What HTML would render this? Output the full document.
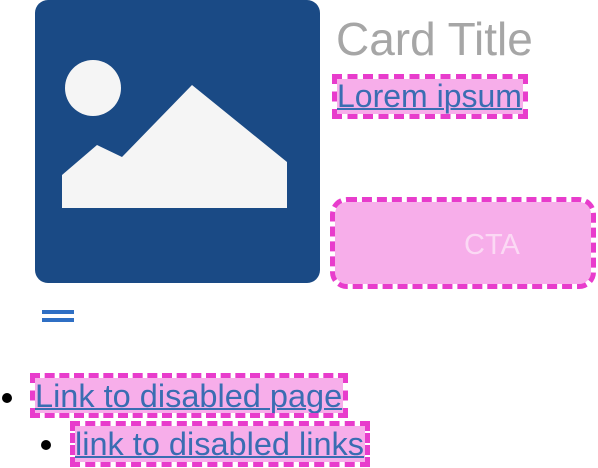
<!DOCTYPE html>
<html><head><style>
body{margin:0;width:598px;height:468px;background:#fff;font-family:"Liberation Sans",sans-serif;position:relative;overflow:hidden}
.a{position:absolute}
.lnk{position:absolute;background:#f7aeea;outline:5px dashed #e83ccc;color:#3a6db2;text-decoration:underline;text-decoration-thickness:2px;white-space:nowrap;line-height:1}
.dot{position:absolute;width:10px;height:10px;border-radius:50%;background:#000}
</style></head><body>
<svg class="a" style="left:35px;top:0" width="286" height="284" viewBox="35 0 286 284">
<rect x="35" y="0" width="285" height="283" rx="13" fill="#1a4a85"/>
<circle cx="93" cy="88" r="28" fill="#f5f5f5"/>
<polygon points="62,175 97,145 122,157 192,85 287,162 287,208 62,208" fill="#f5f5f5"/>
</svg>
<div class="a" style="left:336px;top:15px;font-size:46px;color:#a6a6a6;line-height:1.05">Card Title</div>
<div class="lnk" style="left:337px;top:79px;height:34px;width:186px;font-size:32px;padding-top:1px">Lorem ipsum</div>
<div class="a" style="left:335px;top:202px;width:256px;height:82px;background:#f7aeea;border-radius:12px;outline:5px dashed #e83ccc"></div>
<div class="a" style="left:464px;top:229px;font-size:29px;color:#fbd9f4">CTA</div>
<div class="a" style="left:42px;top:310px;width:32px;height:4px;background:#2f6fc4"></div>
<div class="a" style="left:42px;top:318px;width:32px;height:4px;background:#2f6fc4"></div>
<div class="dot" style="left:2px;top:393px"></div>
<div class="lnk" style="left:35px;top:378px;height:33px;width:308px;font-size:32.5px;padding-top:2px">Link to disabled page</div>
<div class="dot" style="left:41px;top:440px"></div>
<div class="lnk" style="left:75px;top:426px;height:34px;width:290px;font-size:32.5px;padding-top:2px">link to disabled links</div>
</body></html>
